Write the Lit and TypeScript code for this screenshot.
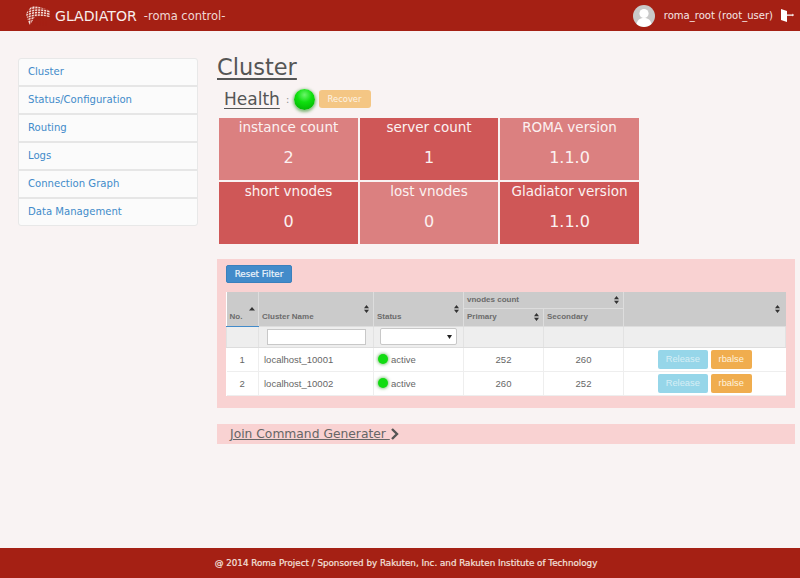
import { LitElement, html, css, svg } from "lit";
import { customElement } from "lit/decorators.js";

const sortBoth = svg`<svg class="sort" width="5" height="8" viewBox="0 0 5 8"><path d="M2.500 0 5 3.200H0zM2.500 8 0 4.800H5z" fill="#333"/></svg>`;
const sortUp = svg`<svg class="sort" width="6" height="3.500" viewBox="0 0 6 3.500"><path d="M3 0 6 3.500H0z" fill="#333"/></svg>`;

@customElement("app-root")
export class AppRoot extends LitElement {
  static styles = css`
    :host { display: flex; flex-direction: column; width: 800px; height: 578px; background: #f9f3f3; font-family: "DejaVu Sans", sans-serif; color: #555; overflow: hidden; }
    * { box-sizing: border-box; }
    .top { height: 31px; flex: none; background: #a52014; display: flex; align-items: center; padding: 0 6px 0 25px; color: #f6e6e4; }
    .logo { margin-right: 5px; display: block; }
    .brand { font-size: 14.1px; color: #f8eeec; }
    .sub { font-size: 11.5px; margin-left: 7px; color: #f0d8d4; }
    .user { margin-left: auto; display: flex; align-items: center; font-size: 10.05px; }
    .avatar { margin-right: 9px; display: block; }
    .door { margin-left: 8px; display: block; }
    .content { flex: 1; display: flex; align-items: flex-start; padding: 27px 5px 0 18px; gap: 19px; }
    .nav { width: 180px; flex: none; border-radius: 3px; background: #fbfbfb; border: 1px solid #e8e8e8; display: flex; flex-direction: column; }
    .nav a { height: 28px; font-size: 10.1px; color: #428bca; padding: 0 9px 1px; display: flex; align-items: center; border-bottom: 2px solid #e6e6e6; }
    .nav a:last-child { border-bottom: 0; height: 26px; }
    .main { flex: 1; min-width: 0; }
    h1 { margin: 0; font-weight: 400; font-size: 22.5px; line-height: 18px; height: 22px; text-decoration: underline; text-underline-offset: 3px; color: #555; }
    .health { display: flex; align-items: center; margin: 5px 0 0 7px; height: 28px; }
    h2 { margin: 0; font-weight: 400; font-size: 17px; text-decoration: underline; text-underline-offset: 3px; color: #555; }
    .colon { font-size: 11px; color: #999; margin: 0 4px 0 6px; }
    .led { width: 21px; height: 21px; border-radius: 50%; background: radial-gradient(circle at 50% 28%, #6cf56c 0, #0fe00f 40%, #05c005 75%, #06a006 100%); box-shadow: 0 1px 3px 1px rgba(40,140,30,.55); }
    .recover { margin-left: 4px; width: 52px; height: 18px; border-radius: 3px; background: #f4c684; color: #fdf3e4; font-size: 8.4px; display: flex; align-items: center; justify-content: center; }
    .stats { display: grid; grid-template-columns: 139px 138px 139px; grid-auto-rows: 62px; gap: 2px; margin: 5px 0 0 2px; }
    .stat { color: #fbf1f1; text-align: center; font-size: 13.5px; line-height: 18px; }
    .stat b { display: block; font-weight: 400; font-size: 16px; line-height: 20px; margin-top: 12px; }
    .a { background: #db8080; }
    .b { background: #cf5757; }
    .panel { margin-top: 15px; height: 149px; background: #f9d2d2; padding: 6px 10px 0 9px; }
    .reset { width: 66px; height: 18px; border-radius: 2px; background: #428bca; border: 1px solid #3a80bd; color: #eef5fb; font-size: 8.7px; -webkit-text-stroke: .2px #eef5fb; display: flex; align-items: center; justify-content: center; }
    table { margin-top: 9px; width: 559px; height: 104px; table-layout: fixed; border-collapse: collapse; font-family: "Liberation Sans", sans-serif; background: #fff; }
    th { background: #cbcbcb; font-size: 8px; font-weight: 700; color: #6c6c6c; text-align: left; padding: 0 3px; border: 1px solid #ddd; border-top: 0; position: relative; vertical-align: bottom; }
    th.g { vertical-align: middle; }
    tr.h1r th { height: 16px; padding-bottom: 0; }
    tr.h2r th { height: 18px; vertical-align: middle; padding-bottom: 2px; }
    th:first-child, td:first-child { border-left: 0; }
    th:last-child, td:last-child { border-right: 0; }
    tr.h1r th.no { border-bottom: 1px solid #428bca; padding-bottom: 5px; }
    tr.h1r th.btm { padding-bottom: 5px; }
    .sort { position: absolute; right: 4px; display: block; }
    .mid .sort { top: 50%; margin-top: -4px; }
    .sort-b .sort { right: 4px; top: 13px; }
    th.no .sort { top: 15px; right: 3px; }
    th.last .sort { right: 6px; }
    .f td { background: #eee; height: 21px; padding: 0; border: 1px solid #e2e2e2; border-bottom: 1px solid #ddd; }
    .filter { display: flex; justify-content: center; }
    .inp { width: 99px; height: 16px; background: #fff; border: 1px solid #c8c8c8; }
    .sel { width: 77px; height: 17px; background: #fff; border: 1px solid #c8c8c8; border-radius: 2px; display: flex; align-items: center; justify-content: flex-end; padding-right: 4px; }
    td { font-size: 9.5px; color: #666; height: 24px; padding: 0 5px; border: 1px solid #eee; }
    td.c { text-align: center; padding: 0; }
    .st { display: flex; align-items: center; gap: 3px; }
    .dot { width: 10px; height: 10px; border-radius: 50%; background: #11dc11; box-shadow: 0 0 3px 1px rgba(40,150,30,.5); }
    .st-cell { padding-left: 4px; }
    .btns { display: flex; justify-content: center; gap: 3px; }
    .btn { height: 19px; border-radius: 2px; color: #fff; font-size: 9.3px; display: flex; align-items: center; justify-content: center; }
    .rel { width: 50px; background: #96d6e9; color: #d7eef5; }
    .rb { width: 41px; background: #f0ad4e; color: #fff2dd; }
    .join { margin-top: 16px; height: 20px; background: #f9d2d2; padding-left: 13px; display: flex; align-items: center; font-size: 12.3px; color: #666; }
    .join span { text-decoration: underline; white-space: pre; }
    .join svg { display: block; }
    .foot { height: 30px; flex: none; background: #a52014; color: #f4e2df; font-size: 8.75px; -webkit-text-stroke: .2px #f4e2df; display: flex; align-items: center; justify-content: center; padding-left: 12px; }
  `;

  logo() {
    const v = [4, 7, 10, 13, 16, 19, 22].map((x) => svg`<path d="M${x} 0 ${x - 1.500} 20" />`);
    const h = [4, 6.500, 9, 11.500, 14].map((y) => svg`<path d="M0 ${y + 2}C8 ${y - 2} 16 ${y - 2} 25 ${y + 0.500}" />`);
    return svg`<svg class="logo" width="25" height="20" viewBox="0 0 25 20"><path d="M1 8C3 4 5 1 8 .5 13 0 19 2 24.500 4.500V11C18 9.500 13 9.500 10 11 8 13 7 16 5 19 3 16 2 12 1 8z" fill="#f6dfda"/><g fill="none" stroke="#a52014" stroke-width=".9">${v}${h}</g></svg>`;
  }

  render() {
    const rows = [
      ["1", "localhost_10001", "252", "260"],
      ["2", "localhost_10002", "260", "252"],
    ];
    const stats = [
      ["instance count", "2", "a"], ["server count", "1", "b"], ["ROMA version", "1.1.0", "a"],
      ["short vnodes", "0", "b"], ["lost vnodes", "0", "a"], ["Gladiator version", "1.1.0", "b"],
    ];
    return html`
      <div class="top">
        ${this.logo()}
        <span class="brand">GLADIATOR</span><span class="sub">-roma control-</span>
        <div class="user">
          <svg class="avatar" width="22" height="22" viewBox="0 0 22 22"><circle cx="11" cy="11" r="11" fill="#c9c9c9"/><circle cx="11" cy="8.500" r="4.600" fill="#fff"/><path d="M3.500 19c1-4.500 4-6 7.500-6s6.500 1.500 7.500 6a11 11 0 0 1-15 0z" fill="#fff"/></svg>
          <span>roma_root (root_user)</span>
          <svg class="door" width="13" height="13" viewBox="0 0 13 13"><path d="M0 0 6 2V13L0 11z" fill="#fff"/><path d="M6 5.500h5.500V4.500L13 6l-1.500 1.500V6.800H6z" fill="#fff"/></svg>
        </div>
      </div>
      <div class="content">
        <nav class="nav">
          ${["Cluster", "Status/Configuration", "Routing", "Logs", "Connection Graph", "Data Management"].map((n) => html`<a>${n}</a>`)}
        </nav>
        <div class="main">
          <h1>Cluster</h1>
          <div class="health">
            <h2>Health</h2><span class="colon">:</span><div class="led"></div><div class="recover">Recover</div>
          </div>
          <div class="stats">
            ${stats.map(([l, v, c]) => html`<div class="stat ${c}">${l}<b>${v}</b></div>`)}
          </div>
          <div class="panel">
            <div class="reset">Reset Filter</div>
            <table>
              <colgroup><col style="width:32px"/><col style="width:115px"/><col style="width:90px"/><col style="width:80px"/><col style="width:80px"/><col style="width:162px"/></colgroup>
              <thead>
                <tr class="h1r">
                  <th rowspan="2" class="no">${sortUp}No.</th>
                  <th rowspan="2" class="btm sort-b">${sortBoth}Cluster Name</th>
                  <th rowspan="2" class="btm sort-b">${sortBoth}Status</th>
                  <th colspan="2" class="g mid">vnodes count${sortBoth}</th>
                  <th rowspan="2" class="mid last">${sortBoth}</th>
                </tr>
                <tr class="h2r">
                  <th class="mid">Primary${sortBoth}</th>
                  <th>Secondary</th>
                </tr>
              </thead>
              <tbody>
                <tr class="f">
                  <td></td>
                  <td><div class="filter"><div class="inp"></div></div></td>
                  <td><div class="filter"><div class="sel"><svg width="5" height="4" viewBox="0 0 5 4"><path d="M0 0H5L2.500 4z" fill="#222"/></svg></div></div></td>
                  <td></td><td></td><td></td>
                </tr>
                ${rows.map((r) => html`<tr>
                  <td class="c">${r[0]}</td>
                  <td>${r[1]}</td>
                  <td class="st-cell"><div class="st"><span class="dot"></span>active</div></td>
                  <td class="c">${r[2]}</td>
                  <td class="c">${r[3]}</td>
                  <td><div class="btns"><div class="btn rel">Release</div><div class="btn rb">rbalse</div></div></td>
                </tr>`)}
              </tbody>
            </table>
          </div>
          <div class="join"><span>Join Command Generater </span><svg width="9" height="12" viewBox="0 0 9 12"><path d="M2 1 7 6 2 11" fill="none" stroke="#555" stroke-width="2.400"/></svg></div>
        </div>
      </div>
      <div class="foot">@ 2014 Roma Project / Sponsored by Rakuten, Inc. and Rakuten Institute of Technology</div>
    `;
  }
}
